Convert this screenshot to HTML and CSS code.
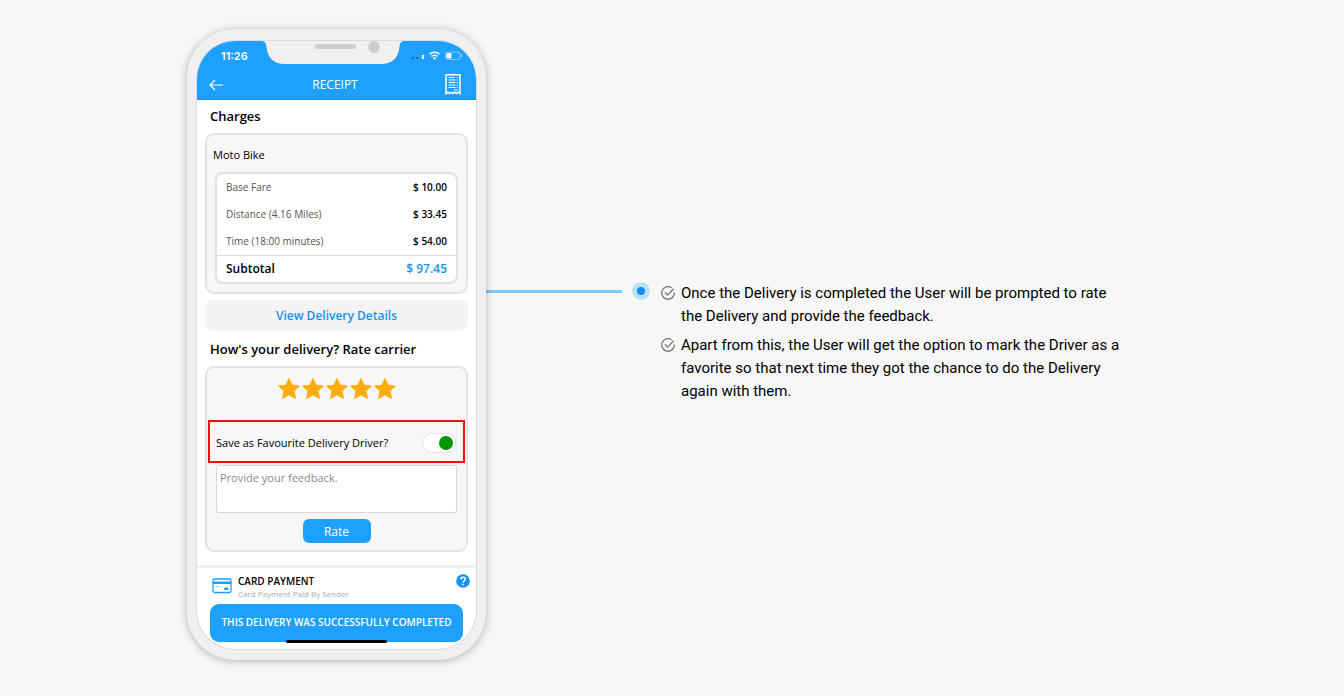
FILE: index.html
```html
<!DOCTYPE html>
<html lang="en">
  <head>
    <meta charset="UTF-8" />
    <meta name="viewport" content="width=device-width, initial-scale=1.0" />
    <title>Delivery Receipt</title>
    <link rel="stylesheet" href="styles.css" />
  </head>
  <body>
    <section class="feature">
      <div class="phone">
        <div class="screen">
          <header class="app-header">
            <div class="status-bar">
              <span class="clock">11:26</span>
              <svg class="status-icons" width="52" height="12" viewBox="0 0 52 12">
                <g fill="#17699f">
                  <rect x="1" y="7" width="2" height="2" />
                  <rect x="5" y="7" width="2" height="2" />
                </g>
                <rect x="9" y="6" width="1" height="3" fill="#5a9cc8" />
                <rect x="11" y="5" width="2" height="4" fill="#fff" />
                <g fill="none" stroke="#fff" stroke-width="1.6">
                  <path d="M18.5 4.3a7 7 0 0 1 10 0" />
                  <path d="M20.4 6.5a4.4 4.4 0 0 1 6.2 0" />
                </g>
                <path d="M21.8 7.9a2.4 2.4 0 0 1 3.4 0L23.5 9.8z" fill="#fff" />
                <rect x="34.5" y="2" width="14.5" height="7.5" rx="2" fill="none" stroke="#83cbff" />
                <rect x="35.5" y="3" width="5" height="5.5" rx="1" fill="#fff" />
                <path d="M50.5 4.2v3" stroke="#83cbff" />
              </svg>
            </div>
            <div class="nav-bar">
              <button class="icon-btn" aria-label="Back">
                <svg width="14" height="12" viewBox="0 0 14 12" fill="none" stroke="#fff" stroke-width="1.2">
                  <path d="M14 6H1M6 1L1 6l5 5" />
                </svg>
              </button>
              <h1>RECEIPT</h1>
              <button class="icon-btn" aria-label="Receipt">
                <svg width="16" height="21" viewBox="0 0 16 21" fill="none" stroke="#fff">
                  <path d="M1 .8h14v18.7l-2-1.3-1.7 1.4-1.7-1.4L8 19.6l-1.7-1.4-1.7 1.4L3 18.2l-2 1.3z" stroke-width="1.5" />
                  <path d="M3.5 3.5h6M3.5 6h7M3.5 8.5h7M3.5 11h7M3.5 13.5h7M9 16h4M11.8 3.5H13M11.8 6H13M11.8 8.5H13M11.8 11H13M11.8 13.5H13" stroke-width="1.2" />
                </svg>
              </button>
            </div>
          </header>

          <main class="content">
            <h2>Charges</h2>
            <div class="card">
              <h3>Moto Bike</h3>
              <div class="fare-box">
                <table class="fare">
                  <tbody>
                    <tr><th scope="row">Base Fare</th><td>$ 10.00</td></tr>
                    <tr><th scope="row">Distance (4.16 Miles)</th><td>$ 33.45</td></tr>
                    <tr><th scope="row">Time (18:00 minutes)</th><td>$ 54.00</td></tr>
                  </tbody>
                  <tfoot>
                    <tr><th scope="row">Subtotal</th><td>$ 97.45</td></tr>
                  </tfoot>
                </table>
              </div>
            </div>
            <button class="details-btn">View Delivery Details</button>

            <h2>How's your delivery? Rate carrier</h2>
            <form class="card rating">
              <svg class="stars" width="120" height="24" viewBox="0 0 120 24" role="img" aria-label="5 stars">
                <defs>
                  <path id="star" d="M12 1.5l3.1 6.7 7.3.9-5.4 5 1.4 7.3L12 17.8l-6.4 3.6L7 14.1l-5.4-5 7.3-.9z" stroke-linejoin="round" />
                </defs>
                <g fill="#fcae0e" stroke="#fcae0e">
                  <use href="#star" />
                  <use href="#star" x="24" />
                  <use href="#star" x="48" />
                  <use href="#star" x="72" />
                  <use href="#star" x="96" />
                </g>
              </svg>
              <div class="favourite">
                <label for="favourite">Save as Favourite Delivery Driver?</label>
                <input id="favourite" class="switch" type="checkbox" checked />
              </div>
              <textarea class="feedback" aria-label="Feedback" placeholder="Provide your feedback."></textarea>
              <button type="button" class="rate-btn">Rate</button>
            </form>
          </main>

          <footer class="payment">
            <div class="payment-row">
              <svg width="20" height="16" viewBox="0 0 20 16" fill="none">
                <rect x="1" y="1" width="18" height="13.5" rx="1.5" stroke="#1e9fff" stroke-width="1.3" />
                <path d="M1 4.8h18" stroke="#1e9fff" stroke-width="2.4" />
                <path d="M3.5 8.5h4" stroke="#8fd0ff" />
                <rect x="12" y="9.5" width="4.5" height="2.5" rx="1" fill="#1e9fff" />
              </svg>
              <div class="payment-text">
                <strong>CARD PAYMENT</strong>
                <small>Card Payment Paid By Sender</small>
              </div>
              <button class="icon-btn help" aria-label="Help">
                <svg width="14" height="14" viewBox="0 0 14 14" fill="none">
                  <circle cx="7" cy="7" r="6.8" fill="#1491f5" />
                  <path d="M4.9 5.5c0-3 4.3-2.8 4.3-.2 0 1.5-2.1 1.6-2.1 3.3M7.1 9.8v1.5" stroke="#fff" stroke-width="1.5" />
                </svg>
              </button>
            </div>
            <button class="done-btn">THIS DELIVERY WAS SUCCESSFULLY COMPLETED</button>
            <span class="home-bar"></span>
          </footer>
        </div>
        <svg class="notch" width="144" height="24" viewBox="0 0 144 24">
          <path d="M0 0c4 0 5 2 5.5 6C6.5 17 13 23 24 23h96c11 0 17.5-6 18.5-17 .5-4 1.5-6 5.5-6z" fill="#f0f0f0" />
          <rect x="54" y="3" width="41" height="5" rx="2.5" fill="#cfcfcf" />
          <circle cx="113" cy="6" r="6" fill="#cfcfcf" />
        </svg>
      </div>

      <div class="pointer">
        <span class="line"></span>
        <span class="dot"></span>
      </div>

      <ul class="notes">
        <li>
          <svg width="14" height="14" viewBox="0 0 14 14" fill="none" stroke="#777" stroke-width="1.3">
            <path d="M10.5 1.7A6.3 6.3 0 1 0 13.3 6.5" />
            <path d="M3.9 6.2l2.7 2.9 6-6.4" />
          </svg>
          <span>Once the Delivery is completed the User will be prompted to rate the Delivery and provide the feedback.</span>
        </li>
        <li>
          <svg width="14" height="14" viewBox="0 0 14 14" fill="none" stroke="#777" stroke-width="1.3">
            <path d="M10.5 1.7A6.3 6.3 0 1 0 13.3 6.5" />
            <path d="M3.9 6.2l2.7 2.9 6-6.4" />
          </svg>
          <span>Apart from this, the User will get the option to mark the Driver as a favorite so that next time they got the chance to do the Delivery again with them.</span>
        </li>
      </ul>
    </section>
  </body>
</html>
```
FILE: styles.css
```css
* {
  box-sizing: border-box;
}
body {
  margin: 0;
  background: #f7f7f7;
  color: #000;
  font-family: "Open Sans", "Noto Sans", sans-serif;
}
button {
  border: 0;
  font-family: inherit;
  cursor: pointer;
}
.feature {
  display: flex;
  align-items: flex-start;
  max-width: 1140px;
  margin: 0 auto;
  padding: 29px 85px 36px;
}

/* phone */
.phone {
  position: relative;
  flex: 0 0 299px;
  padding: 12px 10px 11px;
  background: #f0f0f0;
  border-radius: 48px;
  box-shadow: 0 1px 8px rgba(0, 0, 0, 0.28);
}
.screen {
  overflow: hidden;
  background: #fff;
  border-radius: 38px;
  box-shadow: 0 0 0 1px #d9dbdd;
}
.notch {
  position: absolute;
  top: 12px;
  left: 74px;
}
.app-header {
  background: #1ea0ff;
  border-bottom: 1px solid #0c90f5;
  color: #fff;
}
.status-bar {
  display: flex;
  justify-content: space-between;
  align-items: center;
  height: 29px;
  padding: 0 13px 0 24px;
}
.clock {
  font: 600 11px Inter, sans-serif;
}
.nav-bar {
  display: flex;
  justify-content: space-between;
  align-items: center;
  height: 29px;
  padding: 0 15px 0 12px;
}
.nav-bar h1 {
  margin: 0;
  font-size: 12px;
  font-weight: 400;
}
.icon-btn {
  display: flex;
  padding: 0;
  background: none;
}
.nav-bar .icon-btn {
  width: 18px;
}
.nav-bar .icon-btn:last-child {
  justify-content: flex-end;
}

/* receipt */
.content {
  padding: 0 8px 13px;
}
h2 {
  margin: 0;
  padding: 0 5px;
  font-size: 13px;
  font-weight: 600;
  line-height: 33px;
}
.card {
  padding: 2px 8px 8px;
  background: #f7f7f7;
  border: 2px solid #e4e4e4;
  border-radius: 9px;
}
.card h3 {
  margin: 0 -2px;
  font-size: 11px;
  font-weight: 500;
  line-height: 35px;
}
.fare-box {
  background: #fff;
  border: 2px solid #e2e2e2;
  border-radius: 8px;
}
.fare {
  width: 100%;
  border-collapse: collapse;
  font-size: 10px;
}
.fare th,
.fare td {
  height: 27px;
  padding: 0 9px 1px;
}
.fare th {
  color: #555;
  font-weight: 400;
  text-align: left;
}
.fare td {
  font-weight: 600;
  text-align: right;
}
.fare tfoot th,
.fare tfoot td {
  border-top: 1px solid #dcdcdc;
  color: #000;
  font-size: 12px;
  font-weight: 600;
  padding-bottom: 0;
}
.fare tfoot td {
  color: #1491f5;
}
.details-btn {
  display: block;
  width: 100%;
  height: 30px;
  margin-top: 6px;
  background: #f4f4f4;
  border-radius: 7px;
  color: #1491f5;
  font-size: 12px;
  font-weight: 600;
}
h2:not(:first-child) {
  padding-top: 3px;
}

/* rating */
.rating {
  display: flex;
  flex-direction: column;
  align-items: center;
  padding: 9px 1px 7px;
}
.favourite {
  display: flex;
  justify-content: space-between;
  align-items: center;
  align-self: stretch;
  height: 43px;
  margin-top: 19px;
  padding: 2px 7px 0 6px;
  border: 2px solid #f60b0e;
  font-size: 11px;
}
.switch {
  display: flex;
  justify-content: flex-end;
  align-items: center;
  appearance: none;
  width: 34px;
  height: 20px;
  margin: 0;
  padding: 0 2px;
  background: #fff;
  border: 1px solid #e0e0e0;
  border-radius: 10px;
}
.switch::before {
  content: "";
  width: 14px;
  height: 14px;
  background: #069506;
  border-radius: 50%;
}
.switch:not(:checked) {
  justify-content: flex-start;
}
.feedback {
  width: 241px;
  height: 48px;
  margin: 2px 0 6px;
  padding: 4px 3px;
  border: 1px solid #d8d8d8;
  border-radius: 3px;
  font: 11px "Open Sans", sans-serif;
  resize: none;
}
.feedback::placeholder {
  color: #888;
}
.rate-btn {
  width: 68px;
  height: 24px;
  background: #1ea0ff;
  border-radius: 6px;
  color: #fff;
  font-size: 12px;
}

/* payment */
.payment {
  display: flex;
  flex-direction: column;
  padding: 6px 13px 6px;
  border-top: 3px solid #f0f0f0;
}
.payment-row {
  display: flex;
  align-items: flex-start;
  gap: 6px;
  height: 30px;
  padding-left: 2px;
}
.payment-row > svg {
  margin-top: 4px;
}
.payment-text {
  flex: 1;
  display: flex;
  flex-direction: column;
}
.payment-text strong {
  font-size: 10px;
  font-weight: 600;
  line-height: 14px;
}
.payment-text small {
  color: #aaa;
  font-size: 8px;
  line-height: 12px;
}
.help {
  margin-right: -7px;
}
.done-btn {
  height: 38px;
  padding: 0 0 2px;
  background: #1ea0ff;
  border-radius: 9px;
  color: #fff;
  font-size: 10px;
  font-weight: 600;
}
.home-bar {
  z-index: 1;
  align-self: center;
  width: 101px;
  height: 3px;
  margin-top: -2px;
  background: #000;
  border-radius: 2px;
}

/* notes */
.pointer {
  display: flex;
  align-items: center;
  gap: 10px;
  margin-top: 253px;
}
.line {
  width: 136px;
  height: 3px;
  background: #7accf9;
}
.dot {
  width: 18px;
  height: 18px;
  background: #0b8cff;
  border: 5px solid #bde2f1;
  border-radius: 50%;
}
.notes {
  flex: 0 1 468px;
  display: flex;
  flex-direction: column;
  gap: 6px;
  margin: 253px 0 0 11px;
  padding: 0;
  list-style: none;
  font-family: Roboto, sans-serif;
  font-size: 15px;
  line-height: 23px;
}
.notes li {
  display: flex;
  gap: 6px;
}
.notes svg {
  flex: none;
  margin-top: 4px;
}
```
